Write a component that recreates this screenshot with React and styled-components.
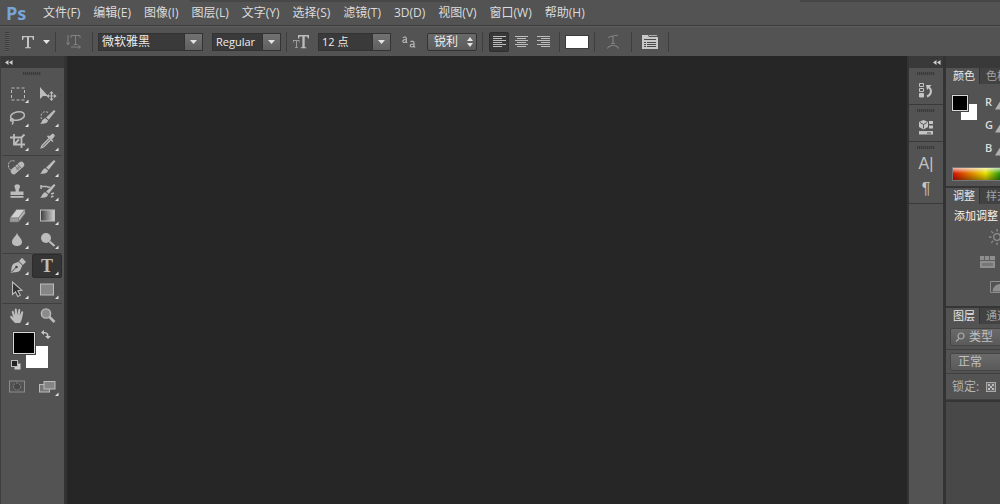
import React from 'react';
import styled, { createGlobalStyle, css } from 'styled-components';

const GlobalStyle = createGlobalStyle`
  *, *::before, *::after { box-sizing: border-box; }
  body {
    margin: 0;
    background: #535353;
    color: #dcdcdc;
    font: 12px/16px "Open Sans", "Noto Sans CJK SC", sans-serif;
    overflow: hidden;
  }
  button, input, select {
    font: inherit;
    color: inherit;
    margin: 0;
    padding: 0;
    border: 0;
    background: none;
    border-radius: 0;
    appearance: none;
  }
  svg { display: block; flex: none; }
`;

const Page = styled.div`
  display: flex;
  flex-direction: column;
  min-height: 100vh;
`;

/* ---------- menu bar ---------- */

const MenuBar = styled.nav`
  display: flex;
  align-items: center;
  gap: 1px;
  height: 26px;
  padding-left: 6px;
  background:
    linear-gradient(90deg, transparent 19%, #484848 19%, #484848 45%, transparent 45%, transparent 80%, #464646 80%) top / 100% 2px no-repeat,
    #535353;
  border-bottom: 1px solid #3a3a3a;
`;

const Logo = styled.span`
  width: 30px;
  color: #78a4d8;
  font: bold 18px/24px "Open Sans", sans-serif;
`;

const MenuItem = styled.button`
  padding: 0 6px;
  line-height: 24px;
  white-space: nowrap;
`;

/* ---------- options bar ---------- */

const OptionsBar = styled.div`
  display: flex;
  align-items: center;
  height: 30px;
  padding-left: 5px;
  background: #535353;
  border-top: 1px solid #5e5e5e;
`;

const Group = styled.div`
  display: flex;
  align-items: center;
  height: 20px;
  gap: ${(p) => p.$gap || 0}px;
  padding: 0 ${(p) => p.$pad ?? 5}px;
  border-right: 1px solid #3e3e3e;
`;

const GripV = styled.div`
  width: 4px;
  height: 20px;
  background: repeating-linear-gradient(#3c3c3c 0 1px, #5c5c5c 1px 2px);
`;

const IconButton = styled.button`
  display: flex;
  align-items: center;
  justify-content: ${(p) => (p.$end ? 'flex-end' : 'center')};
  gap: 8px;
  width: ${(p) => p.$w || 20}px;
  height: 20px;
  color: ${(p) => (p.$dim ? '#828282' : '#bdbdbd')};
  ${(p) => p.$active && css`
    background: #383838;
    border: 1px solid #2e2e2e;
    border-radius: 2px;
  `}
`;

const Combo = styled.div`
  display: flex;
  flex: none;
  width: ${(p) => p.$w}px;
  height: 18px;
  border: 1px solid #333;
  background: #3a3a3a;
`;

const ComboInput = styled.input`
  flex: 1;
  min-width: 0;
  padding-left: 3px;
  color: #ececec;
  font-size: ${(p) => (p.$small ? 11 : 12)}px;
  line-height: 16px;
`;

const ComboArrow = styled.button`
  display: flex;
  align-items: center;
  justify-content: center;
  width: 18px;
  background: linear-gradient(#727272, #606060);
  border-left: 1px solid #333;
`;

const SelectWrap = styled.label`
  display: flex;
  align-items: center;
  position: relative;
  flex: none;
  width: ${(p) => p.$w}px;
  height: 18px;
  border: 1px solid ${(p) => (p.$soft ? '#454545' : '#333')};
  border-radius: 2px;
  background: linear-gradient(#6a6a6a, #5a5a5a);
  color: ${(p) => (p.$soft ? '#c0c0c0' : '#ececec')};
`;

const Select = styled.select`
  width: 100%;
  height: 16px;
  line-height: 16px;
  padding-left: ${(p) => p.$pad}px;
`;

const Over = styled.span`
  position: absolute;
  top: 3px;
  left: ${(p) => (p.$right ? 'auto' : '4px')};
  right: ${(p) => (p.$right ? '3px' : 'auto')};
  pointer-events: none;
`;

const TextColor = styled.button`
  width: 24px;
  height: 14px;
  background: #fff;
  border: 1px solid #3c3c3c;
`;

/* ---------- work area ---------- */

const Workspace = styled.div`
  display: flex;
  flex: 1;
`;

const Strip = styled.div`
  height: 12px;
  padding: 4px 0 0 ${(p) => p.$left}px;
  color: #cfcfcf;
  background: #393939;
`;

const ToolBox = styled.aside`
  flex: none;
  width: 67px;
  border-right: 3px solid #333;
  border-left: 1px solid #3e3e3e;
`;

const GripH = styled.div`
  width: 18px;
  height: 3px;
  margin: ${(p) => p.$m};
  background: repeating-linear-gradient(90deg, #3a3a3a 0 1px, #4c4c4c 1px 2px);
`;

const ToolGroup = styled.div`
  display: grid;
  grid-template-columns: 30px 30px;
  width: 60px;
  margin: 0 1px;
  padding-bottom: 1px;
  border-bottom: 1px solid ${(p) => (p.$last ? 'transparent' : '#3e3e3e')};
`;

const Tool = styled.button`
  height: 24px;
  color: #bcbcbc;
  ${(p) => p.$active && css`
    background: #353535;
    border-radius: 3px;
    box-shadow: inset 0 0 0 1px #2c2c2c;
  `}
`;

const ToolText = styled.span`
  display: block;
  grid-area: 1 / 1;
  font: bold 18px/24px "Liberation Serif", serif;
`;

const TextToolFace = styled.span`
  display: grid;
  justify-items: center;
  & > svg { grid-area: 1 / 1; }
`;

const ColorWell = styled.div`
  position: relative;
  height: 45px;
`;

const Swatch = styled.button`
  position: absolute;
  left: ${(p) => p.$x}px;
  top: ${(p) => p.$y}px;
  width: ${(p) => p.$s}px;
  height: ${(p) => p.$s}px;
  background: ${(p) => p.$c};
  ${(p) => p.$front && css`
    border: 1px solid #d8d8d8;
    box-shadow: 0 0 0 1px #444;
  `}
`;

const CornerButton = styled.button`
  position: absolute;
  left: ${(p) => p.$x}px;
  top: ${(p) => p.$y}px;
`;

const Canvas = styled.main`
  flex: 1;
  background: #262626;
`;

const Dock = styled.aside`
  flex: none;
  width: 39px;
  border-left: 2px solid #333;
  border-right: 3px solid #333;
`;

const DockGroup = styled.div`
  display: flex;
  flex-direction: column;
  align-items: center;
  gap: 5px;
  padding: 4px 0;
  border-bottom: 1px solid #393939;
`;

const DockButton = styled.button`
  display: flex;
  align-items: center;
  justify-content: center;
  width: 24px;
  height: 20px;
  color: #c4c4c4;
  font: 16px/20px "Liberation Sans", sans-serif;
`;

const Panels = styled.aside`
  flex: none;
  width: 54px;
  overflow: hidden;
  background: #484848;
`;

const Panel = styled.section`
  height: ${(p) => p.$h}px;
  background: #535353;
  border-bottom: 2px solid #353535;
`;

const Tabs = styled.div`
  display: flex;
  width: 120px;
  height: 16px;
  background: #3b3b3b;
`;

const Tab = styled.button`
  width: ${(p) => (p.$active ? 34 : 40)}px;
  font-size: 11px;
  line-height: 16px;
  text-align: left;
  padding-left: ${(p) => (p.$active ? 7 : 6)}px;
  border-right: 1px solid #333;
  color: ${(p) => (p.$active ? '#e6e6e6' : '#a2a2a2')};
  background: ${(p) => (p.$active ? '#535353' : '#424242')};
`;

const ColorBody = styled.div`
  display: grid;
  grid-template-columns: 34px 120px;
  height: 83px;
  padding: 6px 0 0 5px;
`;

const ColorPair = styled.div`
  position: relative;
`;

const Channel = styled.label`
  display: flex;
  align-items: center;
  height: 23px;
  font-size: 11px;
  font-weight: 600;
  gap: 2px;
`;

const ChannelName = styled.span`
  width: 8px;
`;

const Range = styled.input`
  width: 100px;
  height: 16px;
  &::-webkit-slider-thumb {
    appearance: none;
    width: 10px;
    height: 8px;
    margin-top: 8px;
    background: #b0b0b0;
    clip-path: polygon(50% 0, 100% 100%, 0 100%);
  }
`;

const Ramp = styled.div`
  width: 150px;
  height: 14px;
  margin-left: 6px;
  border: 1px solid #777;
  background:
    linear-gradient(rgba(255,255,255,.7), rgba(255,255,255,0) 45%, rgba(0,0,0,.35)),
    linear-gradient(90deg, #d81000, #e8e000 22%, #109010 33%, #00c8d8 50%, #1020d0 66%, #d000c0 83%, #d81000);
`;

const AdjustTitle = styled.div`
  padding: 4px 0 0 8px;
  font-size: 11px;
  color: #f4f4f4;
  white-space: nowrap;
`;

const AdjustRow = styled.div`
  display: flex;
  height: 25px;
  align-items: center;
  padding-left: ${(p) => p.$left}px;
  color: #8e8e8e;
`;

const LayerRow = styled.div`
  display: flex;
  align-items: center;
  width: 200px;
  height: ${(p) => p.$h}px;
  padding-left: ${(p) => p.$left}px;
  gap: 7px;
  color: #b4b4b4;
  white-space: nowrap;
  border-bottom: 1px solid #404040;
`;

/* ---------- drawings ---------- */

const Down = () => (
  <svg width="7" height="4" viewBox="0 0 7 4"><path d="M0 0h7L3.5 4z" fill="#e4e4e4" /></svg>
);

const Collapse = () => (
  <svg width="8" height="5" viewBox="0 0 8 5"><path d="M3.5 0v5L0 2.5zM7.5 0v5L4 2.5z" fill="currentColor" /></svg>
);

const Flyout = () => <path d="M26.5 17.500v3.500h-3.500z" fill="#e4e4e4" stroke="none" />;

const brush = (
  <g stroke="none" fill="currentColor">
    <path d="M22 4l1.5 1.2-6.8 8.6-2.6-2.2z" />
    <path d="M13.4 12.3l2.7 2.2c-.7 3-4 3.6-8 3 2-.6 2-4.600 5.300-5.200z" />
  </g>
);

const shapes = {
  marquee: <rect x="9.500" y="6" width="13" height="12" strokeDasharray="3 2" fill="none" />,
  move: (
    <g stroke="none" fill="currentColor">
      <path d="M8 5v12l3-3h5z" />
      <path d="M19.500 9l2.200 2.500h-1.600v2h2v-1.600L24.600 14l-2.500 2.200v-1.600h-2v2h1.600l-2.200 2.500-2.200-2.500h1.600v-2h-2v1.600L14.400 14l2.500-2.100v1.600h2v-2h-1.600z" />
    </g>
  ),
  lasso: (
    <g fill="none" strokeWidth="1.500">
      <ellipse cx="15.500" cy="10" rx="7" ry="4.200" transform="rotate(-12 15.500 10)" />
      <path d="M10 12.500c-2 .5-2 2.800 0 2.600 1.800-.2 1.500-2.200 0-2.300M11 15c.4 1.500 0 2.500-1 3.500" />
    </g>
  ),
  quick: <>
    <path d="M16 6.500c-3-2-7 0-7 4 0 2 .8 3.500 2 4.500" fill="none" strokeDasharray="2 1.500" />
    {brush}
  </>,
  crop: <path d="M12 4v10.500h11M8 7.500h11.500V18M19.500 7.500l3-3M12 14.500l5-5" fill="none" strokeWidth="1.800" />,
  dropper: <>
    <path d="M17 8.500l-7 7-.8 2.300 2.300-.8 7-7" fill="#666" strokeWidth="1.300" />
    <path d="M15 6.500l5.500 5.500 1-1-1.500-1.500 2.500-3c1-1.500-1-3.500-2.500-2.500l-2.700 2.300-1.300-1z" fill="currentColor" stroke="none" />
  </>,
  heal: <>
    <path d="M12.500 5c-4-1-6.500 1-6 5 0 2 1 3 2 4" fill="none" strokeDasharray="2 1" />
    <rect x="7.500" y="9" width="16" height="6" rx="3" transform="rotate(-42 15.500 12)" fill="#b8b8b8" stroke="none" />
    <path d="M13 10l4.500 4.800M15.300 8l4.500 4.800" stroke="#666" strokeWidth=".8" />
    <path d="M16 10.500v1m1 0v1m-2 0v1" stroke="#444" />
  </>,
  brush,
  stamp: (
    <g fill="currentColor" stroke="none">
      <path d="M13.500 11.500c.8-2-1-3-1-5C12.500 3.600 18 3.600 18 6.500c0 2-1.800 3-1 5h4.500v3.500h-13v-3.500z" />
      <path d="M8.500 16h13v1.800h-13z" />
    </g>
  ),
  history: <>
    {brush}
    <path d="M9 6.500h5.500c1.500 0 1.500 2 3.500 0M9 5v4M19 14l3-1M19 17l2.500-1" fill="none" strokeWidth="1.500" />
  </>,
  eraser: (
    <g stroke="#777" strokeWidth=".6">
      <path d="M8 14L14.500 5.500H23L16.500 14z" fill="#d0d0d0" />
      <path d="M8 14h8.500v4H8z" fill="#9a9a9a" />
      <path d="M23 5.500v4L16.500 18v-4z" fill="#b4b4b4" />
    </g>
  ),
  gradient: <>
    <defs><linearGradient id="gr"><stop stopColor="#3c3c3c" /><stop offset="1" stopColor="#d0d0d0" /></linearGradient></defs>
    <rect x="8.500" y="6" width="14" height="11" fill="url(#gr)" />
  </>,
  drop: <path d="M15 5c.8 3 5 5.500 5 9 0 5.300-10 5.300-10 0 0-3.500 4.200-6 5-9z" fill="currentColor" stroke="none" />,
  dodge: <>
    <circle cx="14" cy="10" r="5" fill="currentColor" stroke="none" />
    <path d="M17.500 13.500l5 4.500" strokeWidth="2.200" />
  </>,
  pen: (
    <g>
      <path d="M8.500 19c1.500-3 0-7 3.500-9.500l4.500-1.800 3.800 3.800-2 4.500c-2.300 3.200-6.500 1.700-9.800 3z" fill="currentColor" stroke="none" />
      <path d="M17 7l3-3.200L24 8l-3.200 3z" fill="currentColor" stroke="none" />
      <path d="M9 18.500l5-5" stroke="#444" /><circle cx="14.500" cy="13" r="1.300" fill="#444" stroke="none" />
    </g>
  ),
  select: <path d="M10.500 4v12.500l3-2.600 2.300 4.600 2.500-1.200-2.400-4.500 4-.4z" fill="#333" strokeWidth="1.100" />,
  rect: <rect x="8.500" y="6" width="13" height="11" fill="#858585" />,
  hand: <path d="M13 19c-1.500-2-4.500-4-5-6.500.5-1.300 2-.5 3.300 1.200L9.800 8c0-1.500 1.600-1.600 2 0l1.300 3.500-.4-6c.2-1.500 1.900-1.500 2.100 0l.5 5.800 1-5.500c.5-1.300 2-1 2 .3l-.6 5.700 1.600-4c.8-1.200 2.200-.5 1.900.8L20 14.500c-.5 2-1 3-2 4.500z" fill="currentColor" stroke="none" />,
  zoom: <>
    <circle cx="14" cy="9.500" r="4.600" fill="#8c8c8c" strokeWidth="1.400" />
    <path d="M17.500 13l5 5" strokeWidth="2.600" />
  </>,
  mask: <g stroke="#8c8c8c"><rect x="7.500" y="6" width="15" height="11" fill="none" /><circle cx="15" cy="11.500" r="3.500" fill="#484848" strokeDasharray="2 1" /></g>,
  screen: <><rect x="7.500" y="9.500" width="10" height="7.500" fill="#777" /><rect x="12" y="6.500" width="11" height="7.500" fill="#858585" /></>,
};

const Glyph = ({ name, fly = true }) => (
  <svg width="30" height="24" viewBox="0 0 30 24" stroke="currentColor" fill="currentColor">
    {shapes[name]}
    {fly && <Flyout />}
  </svg>
);

const AlignIcon = ({ kind }) => {
  const widths = [13, 9, 13, 9, 13, 9];
  return (
    <svg width="13" height="12" viewBox="0 0 13 12" fill="currentColor">
      {widths.map((w, i) => (
        <rect key={i} x={kind === 'left' ? 0 : kind === 'right' ? 13 - w : (13 - w) / 2} y={i * 2} width={w} height="1" />
      ))}
    </svg>
  );
};

/* ---------- data ---------- */

const menus = [
  '文件(F)', '编辑(E)', '图像(I)', '图层(L)', '文字(Y)', '选择(S)',
  '滤镜(T)', '3D(D)', '视图(V)', '窗口(W)', '帮助(H)',
];

const toolGroups = [
  [['marquee', '选框'], ['move', '移动'], ['lasso', '套索'], ['quick', '快速选择'], ['crop', '裁剪'], ['dropper', '吸管']],
  [['heal', '修复画笔'], ['brush', '画笔'], ['stamp', '图章'], ['history', '历史记录画笔'], ['eraser', '橡皮擦'], ['gradient', '渐变'], ['drop', '模糊'], ['dodge', '减淡']],
  [['pen', '钢笔'], ['type', '文字'], ['select', '路径选择'], ['rect', '矩形']],
  [['hand', '抓手'], ['zoom', '缩放']],
];

function ComboBox({ w, value, label, small }) {
  return (
    <Combo $w={w}>
      <ComboInput aria-label={label} defaultValue={value} $small={small} />
      <ComboArrow aria-label={label + '列表'}><Down /></ComboArrow>
    </Combo>
  );
}

function Options() {
  return (
    <OptionsBar>
      <GripV />
      <Group $pad={5}>
        <IconButton $w={36} $end aria-label="文字工具预设">
          <svg width="14" height="14" viewBox="0 0 14 14" fill="#c4c4c4"><path d="M1 1h12v4h-1l-.8-2.700H8V12l2 .4v.8H4v-.8l2-.4V2.300H2.800L2 5H1z" /></svg>
          <Down />
        </IconButton>
      </Group>
      <Group $pad={8}>
        <IconButton $dim aria-label="切换文本取向">
          <svg width="16" height="15" viewBox="0 0 16 15" fill="none" stroke="currentColor"><path d="M5 4V1.500h9V4M9.500 1.500V10M7.500 10.500h4M2 1v9M.5 8.500L2 11l1.500-2.500M5 13h9M12.500 11.500l2 1.500-2 1.500" /></svg>
        </IconButton>
      </Group>
      <Group $gap={9} $pad={5}>
        <ComboBox w={105} value="微软雅黑" label="字体" />
        <ComboBox w={69} value="Regular" label="字体样式" small />
      </Group>
      <Group $pad={5} $gap={8}>
        <IconButton $w={18} aria-label="字体大小">
          <svg width="16" height="14" viewBox="0 0 16 14" fill="currentColor"><path d="M5 0h11v3.500h-1l-.7-2h-2.600V12l1.600.4v.8H7.800v-.8l1.600-.4V1.500H6.700L6 3.500H5z" /><path d="M0 5h6.500v2.500H6L5.500 6H4v6l1 .3v.7H2v-.7l1-.3V6H1L.5 7.500H0z" opacity=".7" /></svg>
        </IconButton>
        <ComboBox w={73} value="12 点" label="字号" small />
        <IconButton as="span" $w={20}>
          <svg width="14" height="12" viewBox="0 0 14 12" fill="none" stroke="currentColor" strokeWidth="1.100"><path d="M1 1.800C2 .6 4.300.6 4.300 2.500V6.500h1M4.300 3.500C2 3.500.8 4 .8 5.200c0 1.800 2.500 1.600 3.500 0M8.500 6C9.500 4.800 12 4.800 12 6.700V11h1.300M12 8c-2.500 0-3.800.5-3.800 1.700 0 1.800 2.800 1.600 3.800 0" /></svg>
        </IconButton>
        <SelectWrap $w={50}>
          <Select $pad={6} aria-label="消除锯齿"><option>锐利</option></Select>
          <Over $right>
            <svg width="6" height="10" viewBox="0 0 6 10" fill="#e4e4e4"><path d="M3 0l3 4H0zM3 10l3-4H0z" /></svg>
          </Over>
        </SelectWrap>
      </Group>
      <Group $gap={2} $pad={6}>
        <IconButton $active aria-label="左对齐"><AlignIcon kind="left" /></IconButton>
        <IconButton aria-label="居中对齐"><AlignIcon kind="center" /></IconButton>
        <IconButton aria-label="右对齐"><AlignIcon kind="right" /></IconButton>
      </Group>
      <Group $pad={5}><TextColor aria-label="文本颜色" /></Group>
      <Group $pad={8}>
        <IconButton $dim aria-label="变形文字">
          <svg width="14" height="15" viewBox="0 0 14 15" fill="none" stroke="currentColor" strokeWidth="1.200"><path d="M2.500 4C4 1 6 3 7.500 2S11 1 11.500 2M7 2.500V9M5 9.500h4M1.500 14.500c2-4 9-4 11 0" /></svg>
        </IconButton>
      </Group>
      <Group $pad={8}>
        <IconButton aria-label="字符和段落面板">
          <svg width="16" height="14" viewBox="0 0 16 14"><path d="M0 0h6l1 2h9v12H0z" fill="#c8c8c8" /><path d="M7 .5h8" stroke="#b0b0b0" /><path d="M2 4.500h12M2 7.500h2M5 7.500h9M2 9.500h2M5 9.500h9M2 11.500h2M5 11.500h9" stroke="#4a4a4a" /></svg>
        </IconButton>
      </Group>
    </OptionsBar>
  );
}

function Tools() {
  return (
    <ToolBox>
      <Strip $left={4}><Collapse /></Strip>
      <GripH $m="4px auto 7px 22px" />
      {toolGroups.map((group, g) => (
        <ToolGroup key={g} $last={g === 3}>
          {group.map(([name, label]) => (
            <Tool key={name} aria-label={label} $active={name === 'type'}>
              {name === 'type'
                ? <TextToolFace><ToolText>T</ToolText><svg width="30" height="24" viewBox="0 0 30 24"><Flyout /></svg></TextToolFace>
                : <Glyph name={name} fly={name !== 'move' && name !== 'zoom'} />}
            </Tool>
          ))}
        </ToolGroup>
      ))}
      <ColorWell>
        <Swatch $x={25} $y={16} $s={22} $c="#fff" aria-label="背景色" />
        <Swatch $x={12} $y={2} $s={22} $c="#000" $front aria-label="前景色" />
        <CornerButton $x={40} $y={0} aria-label="切换颜色">
          <svg width="10" height="9" viewBox="0 0 10 9" fill="#c8c8c8"><path d="M3 0v2c3 0 4.500 1 4.500 4H10L7 9 4 6h2C6 4 5 3.300 3 3.300V5L0 2.600z" /></svg>
        </CornerButton>
        <CornerButton $x={10} $y={30} aria-label="默认颜色">
          <svg width="10" height="10" viewBox="0 0 10 10"><rect x="3.500" y="3.500" width="6" height="6" fill="#ccc" /><rect x=".5" y=".5" width="6" height="6" fill="#222" stroke="#bbb" /></svg>
        </CornerButton>
      </ColorWell>
      <ToolGroup $last>
        <Tool aria-label="快速蒙版"><Glyph name="mask" fly={false} /></Tool>
        <Tool aria-label="屏幕模式"><Glyph name="screen" /></Tool>
      </ToolGroup>
    </ToolBox>
  );
}

function IconDock() {
  return (
    <Dock>
      <Strip $left={24}><Collapse /></Strip>
      <DockGroup>
        <GripH $m="0" />
        <DockButton aria-label="历史记录">
          <svg width="14" height="15" viewBox="0 0 14 15" fill="none" stroke="currentColor"><path d="M.5.5h4v3h-4zM.5 5.500h4v3h-4z" /><path d="M.5 10.500h4v3.500h-4z" fill="currentColor" /><path d="M8 13.500c5-2 5-7 1.500-9.500" strokeWidth="2" /><path d="M7 2h5.500L8 7z" fill="currentColor" stroke="none" /></svg>
        </DockButton>
      </DockGroup>
      <DockGroup>
        <GripH $m="0" />
        <DockButton aria-label="属性">
          <svg width="14" height="15" viewBox="0 0 14 15" fill="currentColor"><path d="M4.500 0L9 2v5L4.500 9.500 0 7V2z" /><path d="M1 2.500l3.500 2 3.500-2M4.500 4.500v4" stroke="#555" fill="none" /><path d="M10 1h4v3h-4zM10 5.500h4v3h-4zM0 11h14v3.500H0z" /><path d="M8 13h4" stroke="#444" /></svg>
        </DockButton>
      </DockGroup>
      <DockGroup>
        <GripH $m="0" />
        <DockButton aria-label="字符">A|</DockButton>
        <DockButton aria-label="段落">¶</DockButton>
      </DockGroup>
    </Dock>
  );
}

function RightPanels() {
  return (
    <Panels>
      <Strip $left={0} />
      <Panel $h={120}>
        <Tabs><Tab $active>颜色</Tab><Tab>色板</Tab></Tabs>
        <ColorBody>
          <ColorPair>
            <Swatch $x={10} $y={14} $s={16} $c="#fff" aria-label="背景色" />
            <Swatch $x={1} $y={5} $s={16} $c="#000" $front aria-label="前景色" />
          </ColorPair>
          <div>
            {['R', 'G', 'B'].map((c) => (
              <Channel key={c}><ChannelName>{c}</ChannelName><Range type="range" min="0" max="255" defaultValue="0" /></Channel>
            ))}
          </div>
        </ColorBody>
        <Ramp />
      </Panel>
      <Panel $h={120}>
        <Tabs><Tab $active>调整</Tab><Tab>样式</Tab></Tabs>
        <AdjustTitle>添加调整</AdjustTitle>
        <AdjustRow $left={43}>
          <svg width="16" height="16" viewBox="0 0 16 16" fill="none" stroke="currentColor" strokeWidth="1.300"><circle cx="8" cy="8" r="3.300" /><path d="M8 0v2.500M8 13.500V16M0 8h2.500M13.500 8H16M2.300 2.300l1.800 1.800M11.900 11.900l1.800 1.800M2.300 13.700l1.800-1.800M11.900 4.100l1.800-1.800" /></svg>
        </AdjustRow>
        <AdjustRow $left={34}>
          <svg width="15" height="12" viewBox="0 0 15 12"><path d="M0 0h15v12H0z" fill="#8e8e8e" /><path d="M0 4.500h15M4.500 0v4M9.500 0v4" stroke="#606060" /><path d="M2 7h11v3H2z" fill="#777" /></svg>
        </AdjustRow>
        <AdjustRow $left={44}>
          <svg width="15" height="12" viewBox="0 0 15 12" fill="none" stroke="currentColor"><path d="M.5.500h14v11H.5z" /><path d="M3 10c1-6 4-6 9-7v7z" fill="currentColor" /></svg>
        </AdjustRow>
      </Panel>
      <Panel $h={94}>
        <Tabs><Tab $active>图层</Tab><Tab>通道</Tab></Tabs>
        <LayerRow $h={26} $left={4}>
          <SelectWrap $w={80} $soft>
            <Over><svg width="10" height="10" viewBox="0 0 10 10" fill="none" stroke="#aaa" strokeWidth="1.200"><circle cx="6" cy="4" r="3" /><path d="M4 6.500L1 9.500" /></svg></Over>
            <Select $pad={18} aria-label="图层过滤"><option>类型</option></Select>
          </SelectWrap>
        </LayerRow>
        <LayerRow $h={24} $left={4}>
          <SelectWrap $w={100} $soft>
            <Select $pad={7} aria-label="混合模式"><option>正常</option></Select>
          </SelectWrap>
        </LayerRow>
        <LayerRow $h={26} $left={6}>
          <span>锁定:</span>
          <svg width="10" height="10" viewBox="0 0 10 10"><rect x=".5" y=".5" width="9" height="9" fill="#6a6a6a" stroke="#aaa" /><path d="M2 2h2v2H2zM6 2h2v2H6zM4 4h2v2H4zM2 6h2v2H2zM6 6h2v2H6z" fill="#bbb" /></svg>
        </LayerRow>
      </Panel>
    </Panels>
  );
}

export default function App() {
  return (
    <Page>
      <GlobalStyle />
      <MenuBar>
        <Logo>Ps</Logo>
        {menus.map((name) => <MenuItem key={name}>{name}</MenuItem>)}
      </MenuBar>
      <Options />
      <Workspace>
        <Tools />
        <Canvas />
        <IconDock />
        <RightPanels />
      </Workspace>
    </Page>
  );
}
